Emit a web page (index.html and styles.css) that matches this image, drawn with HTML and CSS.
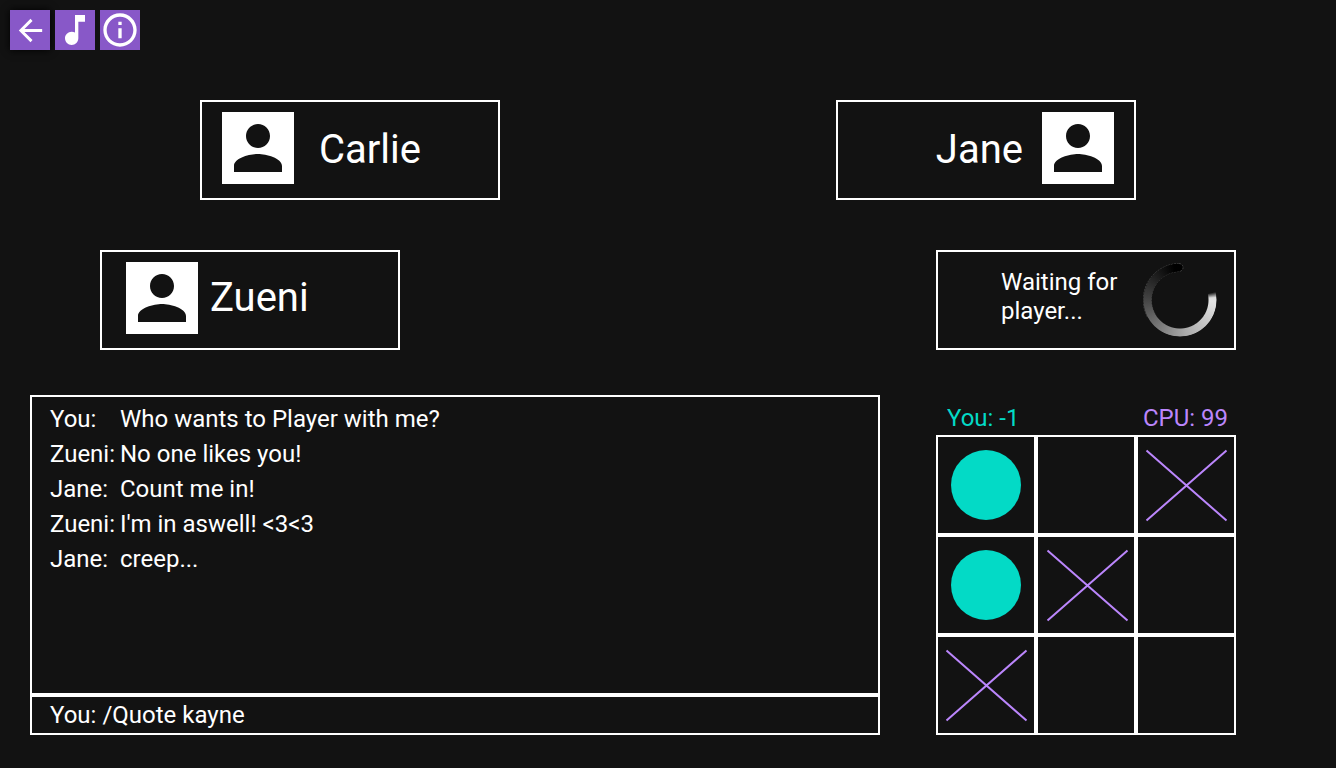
FILE: index.html
```html
<!DOCTYPE html>
<html lang="en">
<head>
<meta charset="utf-8">
<meta name="viewport" content="width=device-width, initial-scale=1">
<title>Game lobby</title>
<link rel="stylesheet" href="styles.css">
</head>
<body>
<svg class="symbols" aria-hidden="true">
  <symbol id="person" viewBox="0 0 24 24"><path d="M12 12c2.210 0 4-1.790 4-4s-1.790-4-4-4-4 1.790-4 4 1.790 4 4 4zm0 2c-2.670 0-8 1.340-8 4v2h16v-2c0-2.660-5.330-4-8-4z"/></symbol>
  <symbol id="cross" viewBox="0 0 96 96"><path d="M8.500 13.500L88.500 83.500M88.500 13.500L8.500 83.500"/></symbol>
  <symbol id="disc" viewBox="0 0 96 96"><circle cx="48" cy="48" r="35"/></symbol>
</svg>
<nav class="toolbar" aria-label="Lobby">
  <button class="tool tool-back" type="button" aria-label="Back"><svg viewBox="0 0 24 24"><path d="M20 11H7.830l5.590-5.590L12 4l-8 8 8 8 1.410-1.410L7.830 13H20v-2z"/></svg></button>
  <button class="tool" type="button" aria-label="Music"><svg viewBox="0 0 24 24"><path d="M12 3v10.550c-.59-.34-1.270-.55-2-.55-2.210 0-4 1.790-4 4s1.790 4 4 4 4-1.790 4-4V7h4V3h-6z"/></svg></button>
  <button class="tool" type="button" aria-label="Info"><svg viewBox="0 0 24 24"><path d="M11 7h2v2h-2zm0 4h2v6h-2zm1-9C6.480 2 2 6.480 2 12s4.480 10 10 10 10-4.480 10-10S17.520 2 12 2zm0 18c-4.410 0-8-3.590-8-8s3.590-8 8-8 8 3.590 8 8-3.590 8-8 8z"/></svg></button>
</nav>
<main>
  <section class="players" aria-label="Players">
    <div class="player-row row-far">
      <article class="player"><svg class="avatar"><use href="#person"/></svg><h2 class="name">Carlie</h2></article>
      <article class="player player-right"><h2 class="name">Jane</h2><svg class="avatar"><use href="#person"/></svg></article>
    </div>
    <div class="player-row row-near">
      <article class="player player-tight"><svg class="avatar"><use href="#person"/></svg><h2 class="name">Zueni</h2></article>
      <article class="player player-waiting">
        <p class="waiting">Waiting for player...</p>
        <div class="spinner"><div class="spinner-ring"></div><svg viewBox="0 0 74 74"><circle class="cap" cx="36" cy="4.500" r="4"/><path class="edge" d="M36 .5A36.500 36.500 0 0 0 5 55M36 8.500A28.500 28.500 0 0 0 12 51M36 .5A4 4 0 0 1 36 8.500"/></svg></div>
      </article>
    </div>
  </section>
  <div class="bottom">
    <section class="chat" aria-label="Chat">
      <ul class="log">
        <li><span>You:</span><span>Who wants to Player with me?</span></li>
        <li><span>Zueni:</span><span>No one likes you!</span></li>
        <li><span>Jane:</span><span>Count me in!</span></li>
        <li><span>Zueni:</span><span>I'm in aswell! &lt;3&lt;3</span></li>
        <li><span>Jane:</span><span>creep...</span></li>
      </ul>
      <form class="compose">
        <label for="message">You:</label>
        <input id="message" type="text" value="/Quote kayne" autocomplete="off" spellcheck="false">
      </form>
    </section>
    <section class="game" aria-label="Tic-tac-toe">
      <div class="score"><span class="you">You: -1</span><span class="cpu">CPU: 99</span></div>
      <div class="board">
        <button class="cell" type="button" aria-label="Top left, you"><svg class="you"><use href="#disc"/></svg></button>
        <button class="cell" type="button" aria-label="Top middle, empty"></button>
        <button class="cell" type="button" aria-label="Top right, CPU"><svg class="cpu"><use href="#cross"/></svg></button>
        <button class="cell" type="button" aria-label="Middle left, you"><svg class="you"><use href="#disc"/></svg></button>
        <button class="cell" type="button" aria-label="Centre, CPU"><svg class="cpu cpu-bold" viewBox="0 0 96 96"><path d="M9.500 13.500L89.500 83.500M89.500 13.500L9.500 83.500"/></svg></button>
        <button class="cell" type="button" aria-label="Middle right, empty"></button>
        <button class="cell" type="button" aria-label="Bottom left, CPU"><svg class="cpu"><use href="#cross"/></svg></button>
        <button class="cell" type="button" aria-label="Bottom middle, empty"></button>
        <button class="cell" type="button" aria-label="Bottom right, empty"></button>
      </div>
    </section>
  </div>
</main>
</body>
</html>
```
FILE: styles.css
```css
* { box-sizing: border-box; }
body {
  margin: 0;
  background: #121212;
  color: #fff;
  font-family: Roboto, "Liberation Sans", sans-serif;
  font-size: 24px;
  line-height: 29px;
}
button, input {
  font: inherit;
  color: inherit;
  background: none;
  border: 0;
  padding: 0;
  margin: 0;
}
button { cursor: pointer; }
svg { display: block; }
.symbols { position: absolute; width: 0; height: 0; }

.toolbar { display: flex; gap: 5px; padding: 10px; }
.tool {
  display: grid;
  place-items: center;
  width: 40px;
  height: 40px;
  background: #8858c8;
}
.tool svg { width: 40px; height: 40px; fill: #fff; }
.tool-back { box-shadow: 0 0 8px #000; }
.tool-back svg { width: 35px; height: 35px; }

.players { display: flex; flex-direction: column; gap: 50px; padding-top: 40px; }
.player-row { display: flex; justify-content: space-between; }
.row-far { padding: 0 200px; }
.row-near { padding: 0 100px; }
.player {
  display: flex;
  align-items: flex-start;
  gap: 25px;
  width: 300px;
  height: 100px;
  padding: 10px 20px;
  border: 2px solid #fff;
}
.player-right { justify-content: flex-end; gap: 19px; }
.player-tight { gap: 12px; padding-left: 24px; }
.player-waiting { justify-content: flex-end; gap: 16px; padding-right: 17px; }
.avatar { width: 72px; height: 72px; background: #fff; fill: #121212; }
.name { margin: 0; font-size: 40px; font-weight: 400; line-height: 76px; }
.player-tight .name { line-height: 72px; }
.waiting { width: 126px; margin: 0; padding-top: 6px; }

.spinner { display: grid; width: 74px; height: 74px; margin-top: 1px; }
.spinner > * { grid-area: 1 / 1; }
.spinner-ring {
  border-radius: 50%;
  background: conic-gradient(transparent 77deg, #ddd 86deg, #e4e4e4 92deg, #aaa 170deg, #777 220deg, #404040 275deg, #000 350deg, #000 358deg, transparent 358deg);
  mask: radial-gradient(circle, transparent 28px, #000 29px, #000 36px, transparent 37px);
}
.cap { fill: #000; }
.edge { fill: none; stroke: #666; stroke-width: 1; stroke-dasharray: 2 1; opacity: .6; }

.bottom { display: flex; gap: 56px; padding: 45px 100px 33px 30px; }
.chat { flex: 1; display: flex; flex-direction: column; min-width: 0; }
.log {
  height: 300px;
  margin: 0;
  padding: 5px 18px;
  border: 2px solid #fff;
  list-style: none;
  line-height: 35px;
}
.log li { display: grid; grid-template-columns: 70px 1fr; }
.compose {
  display: flex;
  align-items: center;
  gap: 6px;
  height: 40px;
  padding: 0 18px;
  border: 2px solid #fff;
}
.compose input { flex: 1; min-width: 0; outline: 0; }

.game { width: 300px; }
.score {
  display: flex;
  justify-content: space-between;
  height: 40px;
  padding: 9px 8px 0 11px;
}
.you { color: #03dac6; fill: #03dac6; }
.cpu { color: #bb86fc; stroke: #bb86fc; stroke-width: 2; fill: none; }
.score .cpu { stroke: none; }
.board { display: grid; grid-template-columns: repeat(3, 1fr); }
.cell { aspect-ratio: 1; border: 2px solid #fff; }
.cell svg { width: 100%; height: 100%; }
```
